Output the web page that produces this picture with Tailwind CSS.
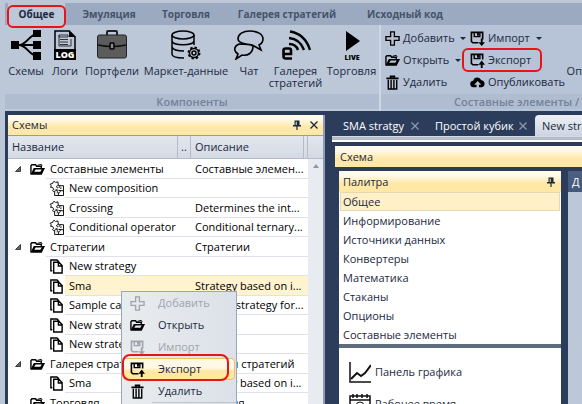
<!DOCTYPE html>
<html lang="ru">
<head>
<meta charset="utf-8">
<meta name="viewport" content="width=device-width, initial-scale=1">
<title>Схемы</title>
<script src="https://cdn.jsdelivr.net/npm/@tailwindcss/browser@4"></script>
</head>
<body class="h-screen overflow-hidden bg-[#bcc7d8] font-['Open_Sans','Noto_Sans',sans-serif] text-[11px] leading-4 text-[#1b293e]">

<svg class="hidden" aria-hidden="true">
  <symbol id="plus" viewBox="0 0 16 16"><path d="M6 1h4v5h5v4h-5v5H6v-5H1V6h5z" fill="none" stroke="currentColor" stroke-width="1.400"/></symbol>
  <symbol id="folder" viewBox="0 0 16 16"><path d="M1 13V4l1-1h4l1 1.500h5V7" fill="none" stroke="currentColor" stroke-width="1.500"/><path d="M8 3.500l4-1 1 1.500" fill="none" stroke="currentColor"/><path fill-rule="evenodd" d="M.5 13.500L4 6.500h12L12.500 13.500zM6 8L4.500 10.500H11l1.500-2.500z" fill="currentColor"/></symbol>
  <symbol id="trash" viewBox="0 0 16 16"><path d="M1.500 3.500h13M6 3V1.500h4V3" fill="none" stroke="currentColor" stroke-width="1.800"/><path d="M3.500 5v10h9V5M6.500 5v9M9.500 5v9" fill="none" stroke="currentColor" stroke-width="1.500"/></symbol>
  <symbol id="import" viewBox="0 0 16 16"><path d="M9 12.500H3L1.500 11V1.500h12V9" fill="none" stroke="currentColor" stroke-width="1.700"/><path d="M4.500 1v5h6V1" fill="none" stroke="currentColor" stroke-width="1.500"/><path d="M7.500 2h2v3h-2zM11.500 8h2v4H16l-3.500 4L9 12h2.500z" fill="currentColor"/></symbol>
  <symbol id="export" viewBox="0 0 16 16"><path d="M9 12.500H3L1.500 11V1.500h12V7" fill="none" stroke="currentColor" stroke-width="1.700"/><path d="M4.500 1v5h6V1" fill="none" stroke="currentColor" stroke-width="1.500"/><path d="M7.500 2h2v3h-2zM11.500 16h2v-3.500H16L12.500 8 9 12.500h2.500z" fill="currentColor"/></symbol>
  <symbol id="cloud" viewBox="0 0 16 16"><path fill-rule="evenodd" d="M4 13a3.500 3.500 0 0 1-.5-7A4.500 4.500 0 0 1 12 5.500 3.800 3.800 0 0 1 12.500 13H9.500V10.500H12L8.200 6.500 4.500 10.500H7V13z" fill="currentColor"/></symbol>
  <symbol id="pages" viewBox="0 0 16 16"><path d="M5 3.500h5.500l3.500 3.500V15H5zM10 4v3.500h4M3.500 12.500H2V1h6.500l2 2" fill="none" stroke="currentColor" stroke-width="1.500"/></symbol>
  <symbol id="puzzle" viewBox="0 0 16 16"><path d="M1 3.500L4 2.500C3.500.5 6.500 0 7 1.500L9.500 1l.5 4h5.500v10.500H6V11c-2 1-3-1.500-1-2L4 7 1.500 6.500C3.500 5.500 2 4.500 1 3.500zM9.500 5c-2.500 0-1.500 3 .5 2M6 11c2-2 4 0 2.500 2M10 15.500v-3c2 .5 3-2 .5-2.500l5 .5M7 9l3 1M12 5c-1.500 2 0 3.500 1.500 2.500" fill="none" stroke="currentColor" stroke-width="1"/></symbol>
  <symbol id="pin" viewBox="0 0 8 10"><path d="M1.500.5h5V5H8v1.500H4.600V10H3.400V6.500H0V5h1.500zM2.700 1.700V5h1V1.700z" fill-rule="evenodd" fill="currentColor"/></symbol>
  <symbol id="close" viewBox="0 0 8 8"><path d="M.5.5l7 7M7.500.5l-7 7" fill="none" stroke="currentColor" stroke-width="1.300"/></symbol>
  <symbol id="expanded" viewBox="0 0 8 8"><path d="M6.500 1.500v5h-5z" fill="#666" stroke="#222" stroke-width=".8"/></symbol>
</svg>

<div class="flex h-full flex-col">
  <header class="ml-[5px] shrink-0 border-t-[3px] border-[#bcc7d8]">
    <nav class="flex h-[22px] bg-[#9ba9c1] pl-[3px] text-[10px] font-bold text-[#46536a]">
      <a href="#" class="relative flex w-[57px] items-center justify-center bg-[#bcc7d8] text-[#1b293e]">Общее<span class="absolute -inset-x-px top-[2px] -bottom-[3px] rounded-md border-2 border-[#e8141c]"></span></a>
      <a href="#" class="flex w-[88px] items-center justify-center">Эмуляция</a>
      <a href="#" class="flex w-[66px] items-center justify-center">Торговля</a>
      <a href="#" class="flex w-[136px] items-center justify-center">Галерея стратегий</a>
      <a href="#" class="flex w-[100px] items-center justify-center whitespace-nowrap">Исходный код</a>
    </nav>
    <div class="flex h-[86px]">
      <section class="flex w-[374px] shrink-0 flex-col">
        <div class="flex grow items-start pt-[5px] leading-3">
          <button class="flex w-[42px] flex-col items-center gap-[5px]">
            <svg class="size-[30px]" viewBox="0 0 30 30"><path d="M4 15h22M26 4C18 5 17 13 9 15c8 2 9 10 17 11" fill="none" stroke="#000" stroke-width="2"/><path d="M0 11h8v8H0zM22 0h8v7h-8zM22 11h8v8h-8zM22 22h8v8h-8z"/></svg>Схемы</button>
          <button class="flex w-[36px] flex-col items-center gap-[5px]">
            <svg class="size-[30px]" viewBox="0 0 30 30"><path d="M5 20V1h14l6 6v13" fill="none" stroke="#000" stroke-width="1.500"/><path d="M19 0v7h7zM4 19h22v11H4z"/><path d="M9 5h9v2H9zM9 5v11h12V9M10 9.500h8M10 12h8M10 14.500h8" fill="none" stroke="#333"/><text x="15" y="28" text-anchor="middle" font-family="Open Sans" font-size="9" font-weight="800" fill="#fff">LOG</text></svg>Логи</button>
          <button class="flex w-[58px] flex-col items-center gap-[5px]">
            <svg class="size-[30px]" viewBox="0 0 30 30"><path d="M10 5V2q0-1 1-1h8q1 0 1 1v3" fill="none" stroke="#222" stroke-width="2"/><rect x=".5" y="5" width="29" height="23" rx="2" fill="#5c5c5c" stroke="#222"/><path d="M1 15q14 3 28 0" fill="none" stroke="#111" stroke-width="1.500"/><rect x="13" y="13" width="4" height="6" rx="1" fill="#888" stroke="#000" stroke-width="1.500"/></svg>Портфели</button>
          <button class="flex w-[90px] flex-col items-center gap-[5px] whitespace-nowrap">
            <svg class="size-[30px]" viewBox="0 0 30 30" fill="none" stroke="#000" stroke-width="1.500"><ellipse cx="12" cy="5" rx="11" ry="4"/><path d="M1 5v19c0 2 3 4 12 4M23 5v10M1 11c1 5 21 5 22 0M1 17c1 3 6 4 12 4"/><circle cx="23" cy="23" r="5.500" stroke-width="2" stroke-dasharray="2.300 2"/><circle cx="23" cy="23" r="4.500"/><circle cx="23" cy="23" r="2"/></svg>Маркет-данные</button>
          <button class="flex w-[36px] flex-col items-center gap-[5px]">
            <svg class="size-[30px]" viewBox="0 0 30 30" fill="none" stroke="#000" stroke-width="1.600"><path d="M16 1c7 0 13 3 13 8 0 3-2 5-4 6l2 5-7-4c-2-2-5-1-8-2-5-1-8-2-8-5 0-5 5-8 12-8zM5 14c-5 2-6 7-1 10l-2 5 6-4c6 1 11-2 11-9-3-2-11-2-14-2z"/></svg>Чат</button>
          <button class="flex w-[57px] flex-col items-center gap-[5px]">
            <svg class="size-[30px]" viewBox="0 0 30 30" fill="none" stroke="#000"><path d="M2.500 24H10v-3.500q0-2-2-2H4.500q-2 0-2 2V26q0 2.500 2 2.500H11" stroke-width="2.600"/><path d="M8 14q7 0 9 6M8 8q11 1 15 12M9 1.500Q24 4 29 20" stroke-width="2.400"/></svg>Галерея стратегий</button>
          <button class="flex w-[55px] flex-col items-center gap-[5px]">
            <svg class="size-[30px]" viewBox="0 0 30 30"><path d="M9 1l14 10L9 21z"/><text x="15" y="30" text-anchor="middle" font-family="Open Sans" font-size="7" font-weight="800">LIVE</text></svg>Торговля</button>
        </div>
        <h2 class="mb-[2px] flex h-[15px] items-center justify-center bg-[#b0bdd0] font-semibold text-[#73819a]">Компоненты</h2>
      </section>
      <section class="flex min-w-0 grow flex-col border-l-2 border-[#cdd6e3] bg-[#b7c3d6]">
        <div class="flex grow items-start pt-[2px]">
          <div class="flex w-[83px] shrink-0 flex-col pl-[4px]">
            <button class="flex h-[22px] items-center gap-[3px]"><svg class="size-[15px] shrink-0 text-black"><use href="#plus"/></svg>Добавить<span class="ml-[2px] border-x-[3px] border-t-[3px] border-x-transparent border-t-[#1b293e]"></span></button>
            <button class="flex h-[22px] items-center gap-[3px]"><svg class="size-[15px] shrink-0 text-black"><use href="#folder"/></svg>Открыть<span class="ml-[3px] border-x-[3px] border-t-[3px] border-x-transparent border-t-[#1b293e]"></span></button>
            <button class="flex h-[22px] items-center gap-[3px]"><svg class="size-[15px] shrink-0 text-black"><use href="#trash"/></svg>Удалить</button>
          </div>
          <div class="flex w-[96px] shrink-0 flex-col pl-[6px]">
            <button class="flex h-[22px] items-center gap-[3px]"><svg class="size-[15px] shrink-0 text-black"><use href="#import"/></svg>Импорт<span class="ml-[3px] border-x-[3px] border-t-[3px] border-x-transparent border-t-[#1b293e]"></span></button>
            <button class="relative flex h-[22px] items-center gap-[3px]"><svg class="size-[15px] shrink-0 text-black"><use href="#export"/></svg>Экспорт<span class="absolute -inset-y-px -left-[8px] w-[80px] rounded-md border-2 border-[#e8141c]"></span></button>
            <button class="flex h-[22px] items-center gap-[3px]"><svg class="size-[15px] shrink-0 text-black"><use href="#cloud"/></svg>Опубликовать</button>
          </div>
          <button class="ml-auto pt-[36px]">Оп</button>
        </div>
        <h2 class="mb-[2px] flex h-[15px] items-center bg-[#b0bdd0] pl-[73px] font-semibold whitespace-nowrap text-[#73819a]">Составные элементы /</h2>
      </section>
    </div>
  </header>

  <main class="ml-[5px] flex min-h-0 grow bg-[#2c3d5c] pt-[4px] pl-[3px]">
    <section class="relative flex w-[317px] shrink-0 flex-col border-r-2 border-[#8e9bbc] bg-white">
      <div class="flex h-[21px] shrink-0 items-center border-b border-[#8e9bbc] bg-linear-to-b from-[#fffaea] from-20% to-[#ffe8a6] to-60% pr-[5px] pl-[4px]">
        <h1 class="grow">Схемы</h1>
        <button aria-label="Закрепить" class="mr-[9px]"><svg class="h-[10px] w-[8px]"><use href="#pin"/></svg></button>
        <button aria-label="Закрыть"><svg class="size-[8px]"><use href="#close"/></svg></button>
      </div>
      <div class="flex min-h-0 grow overflow-hidden">
        <table class="min-w-0 grow table-fixed border-separate border-spacing-0 self-start whitespace-nowrap text-black">
          <colgroup><col class="w-[170px]"><col class="w-[13px]"><col class="w-[113px]"><col class="w-[4px]"></colgroup>
          <thead class="[&_th]:border-r [&_th]:border-b [&_th]:border-[#b4bccb] [&_th]:p-0 [&_th]:font-normal">
            <tr class="h-[23px] bg-linear-to-b from-[#e2e6ed] to-[#d4dae4] text-left text-[#1b293e]">
              <th><div class="pl-[4px]">Название</div></th>
              <th><div class="text-center">..</div></th>
              <th><div class="pl-[4px]">Описание</div></th>
              <th></th>
            </tr>
          </thead>
          <tbody class="[&_td]:h-[inherit] [&_td]:p-0 [&_td+td]:border-b [&_td+td]:border-[#dfe2ed] [&_td:nth-child(3)]:pl-[4px] [&_div]:flex [&_div]:h-full [&_div]:items-center [&_div>span]:flex [&_div>span]:h-full [&_div>span]:grow [&_div>span]:items-center [&_div>span]:border-b [&_div>span]:border-[#dfe2ed] [&_div>span]:pl-[4px] [&_use]:text-black">
            <tr class="odd:h-[20px] even:h-[19px]"><td><div class="pl-[6px]"><svg class="mr-[8px] size-[8px]"><use href="#expanded"/></svg><svg class="mr-px size-[15px]"><use href="#folder"/></svg><span>Составные элементы</span></div></td><td></td><td>Составные элемен...</td><td></td></tr>
            <tr class="odd:h-[20px] even:h-[19px]"><td><div class="pl-[41px]"><svg class="mr-px size-[15px]"><use href="#puzzle"/></svg><span>New composition</span></div></td><td></td><td></td><td></td></tr>
            <tr class="odd:h-[20px] even:h-[19px]"><td><div class="pl-[41px]"><svg class="mr-px size-[15px]"><use href="#puzzle"/></svg><span>Crossing</span></div></td><td></td><td>Determines the int...</td><td></td></tr>
            <tr class="odd:h-[20px] even:h-[19px]"><td><div class="pl-[41px]"><svg class="mr-px size-[15px]"><use href="#puzzle"/></svg><span>Conditional operator</span></div></td><td></td><td>Conditional ternary...</td><td></td></tr>
            <tr class="odd:h-[20px] even:h-[19px]"><td><div class="pl-[6px]"><svg class="mr-[8px] size-[8px]"><use href="#expanded"/></svg><svg class="mr-px size-[15px]"><use href="#folder"/></svg><span>Стратегии</span></div></td><td></td><td>Стратегии</td><td></td></tr>
            <tr class="odd:h-[20px] even:h-[19px]"><td><div class="pl-[41px]"><svg class="mr-px size-[15px]"><use href="#pages"/></svg><span>New strategy</span></div></td><td></td><td></td><td></td></tr>
            <tr class="odd:h-[20px] even:h-[19px] [&_td+td]:bg-[#fff3d0]"><td><div class="pl-[41px]"><svg class="mr-px size-[15px]"><use href="#pages"/></svg><span class="bg-[#fff3d0]">Sma</span></div></td><td></td><td>Strategy based on i...</td><td></td></tr>
            <tr class="odd:h-[20px] even:h-[19px]"><td><div class="pl-[41px]"><svg class="mr-px size-[15px]"><use href="#pages"/></svg><span>Sample can</span></div></td><td></td><td>Sample strategy for...</td><td></td></tr>
            <tr class="odd:h-[20px] even:h-[19px]"><td><div class="pl-[41px]"><svg class="mr-px size-[15px]"><use href="#pages"/></svg><span>New strategy</span></div></td><td></td><td></td><td></td></tr>
            <tr class="odd:h-[20px] even:h-[19px]"><td><div class="pl-[41px]"><svg class="mr-px size-[15px]"><use href="#pages"/></svg><span>New strategy</span></div></td><td></td><td></td><td></td></tr>
            <tr class="odd:h-[20px] even:h-[19px]"><td><div class="pl-[6px]"><svg class="mr-[8px] size-[8px]"><use href="#expanded"/></svg><svg class="mr-px size-[15px]"><use href="#folder"/></svg><span>Галерея стратегий</span></div></td><td></td><td>Галерея стратегий</td><td></td></tr>
            <tr class="odd:h-[20px] even:h-[19px]"><td><div class="pl-[41px]"><svg class="mr-px size-[15px]"><use href="#pages"/></svg><span>Sma</span></div></td><td></td><td>Strategy based on i...</td><td></td></tr>
            <tr class="odd:h-[20px] even:h-[19px]"><td><div class="pl-[22px]"><svg class="mr-px size-[15px]"><use href="#folder"/></svg><span>Торговля</span></div></td><td></td><td>Торговля</td><td></td></tr>
          </tbody>
        </table>
        <div class="flex w-[15px] shrink-0 flex-col bg-[#e8ebf0]">
          <div class="h-[23px] border-b border-[#b4bccb] bg-linear-to-b from-[#e2e6ed] to-[#d4dae4]"></div>
          <span class="mt-[5px] self-center border-x-[3px] border-b-[4px] border-x-transparent border-b-[#8b97ad]"></span>
        </div>
      </div>

      <div role="menu" class="absolute top-[176px] left-[113px] flex w-[116px] flex-col border border-[#9ba7b7] bg-linear-to-r from-[#e9ecee] to-[#dce1e9] text-[#1b293e]">
        <button role="menuitem" disabled class="flex h-[22px] items-center gap-[13px] pl-[8px] text-[#a0a4aa]"><svg class="size-[15px]"><use href="#plus"/></svg>Добавить</button>
        <button role="menuitem" class="flex h-[22px] items-center gap-[13px] pl-[8px]"><svg class="size-[15px] text-black"><use href="#folder"/></svg>Открыть</button>
        <button role="menuitem" disabled class="flex h-[22px] items-center gap-[13px] pl-[8px] text-[#a0a4aa]"><svg class="size-[15px]"><use href="#import"/></svg>Импорт</button>
        <button role="menuitem" class="relative mr-px flex h-[22px] items-center gap-[13px] rounded-sm border border-[#e5c365] bg-linear-to-b from-[#fff8e5] from-45% to-[#ffe8a0] to-60% pl-[7px]"><svg class="size-[15px] text-black"><use href="#export"/></svg>Экспорт<span class="absolute -top-[5px] -bottom-[2px] -left-px w-[107px] rounded-lg border-2 border-[#e8141c]"></span></button>
        <button role="menuitem" class="flex h-[22px] items-center gap-[13px] pl-[8px]"><svg class="size-[15px] text-black"><use href="#trash"/></svg>Удалить</button>
        <div class="ml-[30px] h-[4px] border-t border-[#bfc5cf]"></div>
      </div>
    </section>

    <section class="ml-[7px] flex min-w-0 grow flex-col">
      <nav class="flex h-[21px] shrink-0 pl-[11px] whitespace-nowrap text-white">
        <a href="#" class="flex w-[92px] shrink-0 items-center justify-between pr-[16px]">SMA stratgy<svg class="size-[8px] text-[#8c98b0]"><use href="#close"/></svg></a>
        <a href="#" class="flex w-[100px] shrink-0 items-center justify-between pr-[8px]">Простой кубик<svg class="size-[8px] text-[#8c98b0]"><use href="#close"/></svg></a>
        <a href="#" class="flex min-w-0 grow items-center rounded-tl-sm bg-linear-to-b from-[#eef1f6] to-[#ccd4e1] pl-[7px] text-[#1b293e]">New stra</a>
      </nav>
      <div class="h-[6px] shrink-0 border-t border-b-2 border-t-[#d5dbe6] border-b-white bg-[#b5bdcd]"></div>
      <div class="flex min-h-0 grow flex-col pt-[4px] pl-[3px]">
        <h2 class="flex h-[21px] shrink-0 items-center bg-linear-to-b from-[#fffaea] from-20% to-[#ffe8a6] to-60% pl-[5px]">Схема</h2>
        <div class="flex min-h-0 grow pt-[4px] pl-[4px]">
          <div class="flex w-[222px] shrink-0 flex-col overflow-hidden bg-white">
            <div class="flex h-[21px] shrink-0 items-center bg-linear-to-b from-[#fffaea] from-20% to-[#ffe8a6] to-60% pr-[6px] pl-[4px]">
              <h3 class="grow">Палитра</h3>
              <button aria-label="Закрепить"><svg class="h-[10px] w-[8px]"><use href="#pin"/></svg></button>
            </div>
            <ul class="shrink-0">
              <li class="mx-px flex h-[19px] items-center border border-[#e3d9b4] bg-[#fff0c8] pl-[2px]">Общее</li>
              <li class="flex h-[19px] items-center pl-[4px]">Информирование</li>
              <li class="flex h-[19px] items-center pl-[4px]">Источники данных</li>
              <li class="flex h-[19px] items-center pl-[4px]">Конвертеры</li>
              <li class="flex h-[19px] items-center pl-[4px]">Математика</li>
              <li class="flex h-[19px] items-center pl-[4px]">Стаканы</li>
              <li class="flex h-[19px] items-center pl-[4px]">Опционы</li>
              <li class="flex h-[19px] items-center pl-[4px]">Составные элементы</li>
            </ul>
            <div class="h-[4px] shrink-0 bg-[#5f6c80]"></div>
            <ul class="pt-[8px] pl-[10px]">
              <li class="flex h-[32px] items-center gap-[4px]"><svg class="size-[22px]" viewBox="0 0 22 22" fill="none" stroke="#111"><path d="M1 1v20h21" stroke-width="1.500"/><path d="M2 18l6-6 4 3 4-3 6-8" stroke-width="2"/></svg>Панель графика</li>
              <li class="flex h-[32px] items-center gap-[4px]"><svg class="size-[22px]" viewBox="0 0 22 22" fill="none" stroke="#111"><path d="M1 3h20v18H1zM1 7h20" stroke-width="1.500"/><path d="M4 1v4M8 1v4M13 1v4M18 1v4" stroke-width="1.500"/><circle cx="11" cy="13" r="4"/></svg>Рабочее время</li>
            </ul>
          </div>
          <div class="ml-[7px] flex min-w-0 grow flex-col bg-[#bcc7d8]">
            <h3 class="flex h-[21px] items-center bg-linear-to-b from-[#4d6082] to-[#44587a] pl-[4px] text-white">Д</h3>
          </div>
        </div>
      </div>
    </section>
  </main>
</div>
</body>
</html>
